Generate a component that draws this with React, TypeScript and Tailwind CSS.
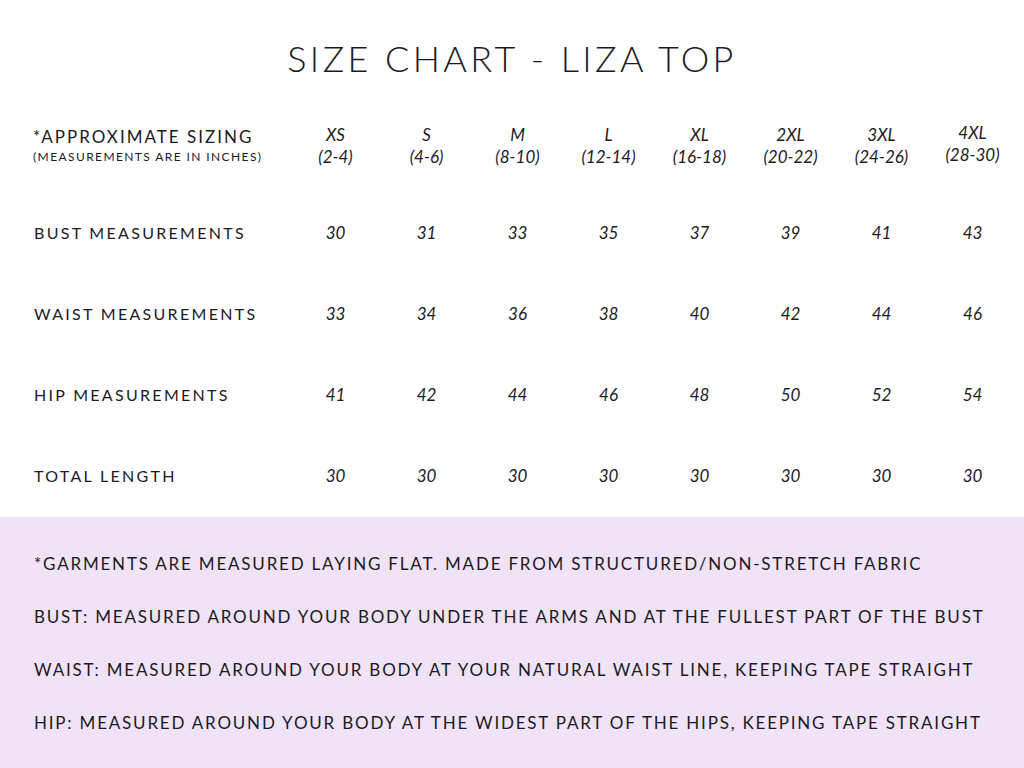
const sizes = [
  { size: 'XS', range: '(2-4)' },
  { size: 'S', range: '(4-6)' },
  { size: 'M', range: '(8-10)' },
  { size: 'L', range: '(12-14)' },
  { size: 'XL', range: '(16-18)' },
  { size: '2XL', range: '(20-22)' },
  { size: '3XL', range: '(24-26)' },
  { size: '4XL', range: '(28-30)' }
];

const rows = [
  { label: 'BUST MEASUREMENTS', values: [30, 31, 33, 35, 37, 39, 41, 43] },
  { label: 'WAIST MEASUREMENTS', values: [33, 34, 36, 38, 40, 42, 44, 46] },
  { label: 'HIP MEASUREMENTS', values: [41, 42, 44, 46, 48, 50, 52, 54] },
  { label: 'TOTAL LENGTH', values: [30, 30, 30, 30, 30, 30, 30, 30] }
];

const notes = [
  '*GARMENTS ARE MEASURED LAYING FLAT. MADE FROM STRUCTURED/NON-STRETCH FABRIC',
  'BUST: MEASURED AROUND YOUR BODY UNDER THE ARMS AND AT THE FULLEST PART OF THE BUST',
  'WAIST: MEASURED AROUND YOUR BODY AT YOUR NATURAL WAIST LINE, KEEPING TAPE STRAIGHT',
  'HIP: MEASURED AROUND YOUR BODY AT THE WIDEST PART OF THE HIPS, KEEPING TAPE STRAIGHT'
];

export default function App() {
  return (
    <div className="w-[1024px] h-[768px] bg-white text-[#1c1a1f] font-['Lato',sans-serif] overflow-hidden">
      <div className="h-[100px] flex items-center justify-center pt-[16px]">
        <h1 className="text-[36px] tracking-[3.4px] font-light leading-none">SIZE CHART - LIZA TOP</h1>
      </div>

      <div className="grid grid-cols-[290px_repeat(8,91px)]">
        <div className="h-[92px] flex flex-col justify-center pl-[33px]">
          <p className="text-[17px] tracking-[2px] leading-[22px]">*APPROXIMATE SIZING</p>
          <p className="text-[12px] tracking-[1.4px] leading-[18px]">(MEASUREMENTS ARE IN INCHES)</p>
        </div>
        {sizes.map((s, i) => (
          <div
            key={s.size}
            className={
              i === 7
                ? 'h-[92px] pb-[4px] flex flex-col justify-center items-center italic text-[17px] leading-[22px]'
                : 'h-[92px] flex flex-col justify-center items-center italic text-[17px] leading-[22px]'
            }>
            <span>{s.size}</span>
            <span>{s.range}</span>
          </div>
        ))}

        {rows.map(r => (
          <div key={r.label} className="contents">
            <div className="h-[81px] flex items-center pl-[34px] text-[16px] tracking-[2.3px]">{r.label}</div>
            {r.values.map((v, i) => (
              <div key={i} className="h-[81px] flex items-center justify-center italic text-[17px]">
                {v}
              </div>
            ))}
          </div>
        ))}
      </div>

      <div className="mt-[1px] h-[251px] bg-[#f0e3f8] pt-[20px] pl-[34px]">
        {notes.map(n => (
          <p key={n} className="text-[17px] tracking-[1.8px] leading-[53px] whitespace-nowrap">
            {n}
          </p>
        ))}
      </div>
    </div>
  );
}
